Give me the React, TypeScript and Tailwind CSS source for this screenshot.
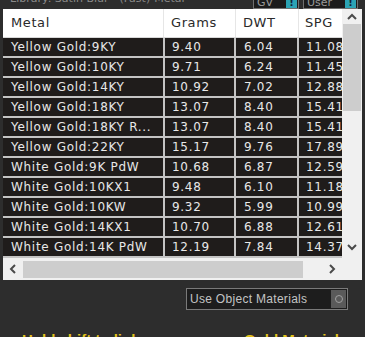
import React from "react";

const rows: [string, string, string, string][] = [
  ["Yellow Gold:9KY", "9.40", "6.04", "11.08"],
  ["Yellow Gold:10KY", "9.71", "6.24", "11.45"],
  ["Yellow Gold:14KY", "10.92", "7.02", "12.88"],
  ["Yellow Gold:18KY", "13.07", "8.40", "15.41"],
  ["Yellow Gold:18KY R...", "13.07", "8.40", "15.41"],
  ["Yellow Gold:22KY", "15.17", "9.76", "17.89"],
  ["White Gold:9K PdW", "10.68", "6.87", "12.59"],
  ["White Gold:10KX1", "9.48", "6.10", "11.18"],
  ["White Gold:10KW", "9.32", "5.99", "10.99"],
  ["White Gold:14KX1", "10.70", "6.88", "12.61"],
  ["White Gold:14K PdW", "12.19", "7.84", "14.37"],
];

const Chevron = ({ dir }: { dir: "up" | "down" | "left" | "right" }) => {
  const d =
    dir === "up"
      ? "M1 6 L5 2 L9 6"
      : dir === "down"
      ? "M1 2 L5 6 L9 2"
      : dir === "left"
      ? "M6 1 L2 5 L6 9"
      : "M2 1 L6 5 L2 9";
  const w = dir === "up" || dir === "down" ? 10 : 8;
  const h = dir === "up" || dir === "down" ? 8 : 10;
  return (
    <svg width={w} height={h} viewBox={`0 0 ${w} ${h}`}>
      <path d={d} fill="none" stroke="#4a4a4a" strokeWidth="2" />
    </svg>
  );
};

const ToggleBox = ({ label, w }: { label: string; w: string }) => (
  <div className={`flex h-[12px] items-stretch border border-[#6f6f6f] bg-[#1c1c1c] ${w}`}>
    <span className="flex-1 pl-[3px] text-[11px] leading-[10px] text-[#9a9a9a]">{label}</span>
    <span className="mr-[1px] flex w-[11px] items-start justify-center bg-[#2ba3b4] text-[10px] font-bold leading-[10px] text-[#123]">
      !
    </span>
  </div>
);

export default function App() {
  return (
    <div
      className="flex h-[337px] w-[365px] flex-col overflow-hidden bg-[#2d2d2d]"
      style={{ fontFamily: "'DejaVu Sans', Verdana, sans-serif" }}
    >
      {/* top bar */}
      <div className="flex h-[18px] items-start">
        <div className="-mt-[8px] ml-[10px] text-[11px] leading-[14px] text-[#8a8a8a]">
          Library: Satin Blur - (Fast)-Metal
        </div>
        <div className="ml-auto mr-[7px] -mt-[3px] flex gap-[4px]">
          <ToggleBox label="GV" w="w-[46px]" />
          <ToggleBox label="User" w="w-[55px]" />
        </div>
      </div>

      {/* table panel */}
      <div className="ml-[3px] flex h-[271px] w-[359px] flex-col bg-white">
        <div className="flex h-[249px]">
          <div className="flex w-[339px] flex-col">
            {/* header */}
            <div className="flex h-[29px] items-center border-b border-[#d8d8d8] bg-white text-[13px] tracking-[0.6px] text-[#2a2a2a]">
              <div className="flex h-full w-[161px] items-center border-r border-[#e6e6e6] pl-[8px]">Metal</div>
              <div className="flex h-full w-[72px] items-center border-r border-[#e6e6e6] pl-[7px]">Grams</div>
              <div className="flex h-full w-[63px] items-center border-r border-[#e6e6e6] pl-[7px]">DWT</div>
              <div className="flex h-full flex-1 items-center overflow-hidden whitespace-nowrap pl-[6px]">SPG</div>
            </div>
            {rows.map((r, i) => (
              <div
                key={i}
                className="flex h-[20px] gap-[2px] bg-[#c4c4c4] pb-[2px] text-[12px] leading-[18px] tracking-[0.7px] text-[#e8e8e8]"
              >
                <div className="w-[160px] overflow-hidden whitespace-nowrap bg-[#1f1c1b] pl-[8px]">{r[0]}</div>
                <div className="w-[69px] overflow-hidden whitespace-nowrap bg-[#1f1c1b] pl-[7px]">{r[1]}</div>
                <div className="w-[61px] overflow-hidden whitespace-nowrap bg-[#1f1c1b] pl-[8px]">{r[2]}</div>
                <div className="flex-1 overflow-hidden whitespace-nowrap bg-[#1f1c1b] pl-[7px]">{r[3]}</div>
              </div>
            ))}
          </div>
          {/* vertical scrollbar */}
          <div className="flex w-[20px] flex-col bg-[#f0f0f0]">
            <div className="flex h-[15px] items-center justify-center pt-[1px]">
              <Chevron dir="up" />
            </div>
            <div className="ml-[1px] h-[87px] w-[18px] bg-[#cdcdcd]" />
            <div className="flex-1" />
            <div className="flex h-[18px] items-start justify-center pt-[3px]">
              <Chevron dir="down" />
            </div>
          </div>
        </div>
        {/* horizontal scrollbar */}
        <div className="flex h-[22px] items-center bg-[#f0f0f0]">
          <div className="flex w-[20px] items-center justify-center">
            <Chevron dir="left" />
          </div>
          <div className="h-[17px] w-[280px] bg-[#cdcdcd]" />
          <div className="flex-1" />
          <div className="flex w-[20px] items-center justify-center">
            <Chevron dir="right" />
          </div>
          <div className="w-[20px]" />
        </div>
      </div>

      {/* use object materials */}
      <div className="mt-[8px] flex justify-end pr-[17px]">
        <div className="flex h-[22px] w-[162px] items-center border border-[#7a7a7a] bg-[#1d1d1d]">
          <span
            className="flex-1 pl-[3px] text-[12px] tracking-[0.3px] text-[#c4c4c4]"
            style={{ fontFamily: "'Liberation Sans', Arial, sans-serif" }}
          >
            Use Object Materials
          </span>
          <span className="mr-[1px] flex h-[18px] w-[15px] items-center justify-center bg-[#5a5a5a]">
            <span className="h-[8px] w-[8px] rounded-full border border-[#a0a0a0]" />
          </span>
        </div>
      </div>

      {/* cut-off yellow text */}
      <div
        className="mt-[21px] flex text-[15px] font-bold leading-[18px] text-[#e2c21c]"
        style={{ fontFamily: "'Liberation Sans', Arial, sans-serif" }}
      >
        <span className="ml-[22px]">Hold shift to link</span>
        <span className="ml-auto mr-[26px]">Gold Material</span>
      </div>
    </div>
  );
}
